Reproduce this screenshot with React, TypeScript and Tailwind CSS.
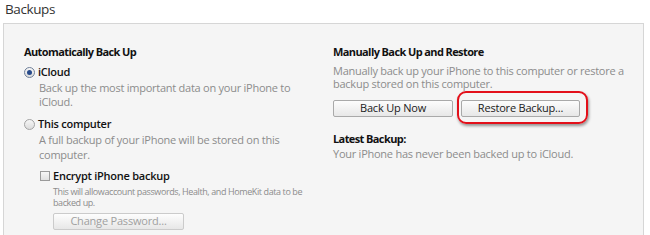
import React from "react";

function Radio({ checked }: { checked?: boolean }) {
  return (
    <span
      className={`flex h-[11px] w-[11px] shrink-0 items-center justify-center rounded-full border bg-gradient-to-b from-[#f6f6f6] to-[#dcdcdc] ${
        checked ? "border-[#6f7f99]" : "border-[#a3a3a3]"
      }`}
    >
      {checked && <span className="h-[5px] w-[5px] rounded-full bg-[#274a8a]" />}
    </span>
  );
}

function Button({ label, disabled }: { label: string; disabled?: boolean }) {
  return (
    <div
      className={`flex h-[17px] items-center justify-center rounded-[2px] border bg-gradient-to-b from-[#fdfdfd] to-[#e7e7e7] text-[11px] tracking-[-0.2px] ${
        disabled ? "border-[#cbcbcb] text-[#a0a0a0]" : "border-[#a9a9a9] text-[#1a1a1a]"
      }`}
    >
      {label}
    </div>
  );
}

export default function App() {
  return (
    <div
      className="h-[235px] w-[650px] overflow-hidden bg-white"
      style={{ fontFamily: '"Open Sans", "Noto Sans", sans-serif' }}
    >
      <h1 className="pl-[5px] text-[13.5px] leading-[18px] tracking-[-0.4px] text-[#333]">Backups</h1>
      <div className="ml-[3px] mr-[6px] mt-[5px] flex h-[220px] border border-[#d6d6d6] bg-[#f5f5f5] pt-[20px] text-[11px] tracking-[-0.25px]">
        {/* automatic backup */}
        <div className="w-[329px] pl-[20px]">
          <h2 className="font-bold leading-[16px] tracking-[-0.6px] text-[#111]">Automatically Back Up</h2>
          <label className="mt-[4px] flex items-center gap-[3px] leading-[16px] text-[#111]">
            <Radio checked />
            <span className="font-semibold">iCloud</span>
          </label>
          <p className="mt-[1px] w-[280px] pl-[15px] leading-[14px] text-[#8c8c8c]">
            Back up the most important data on your iPhone to iCloud.
          </p>
          <label className="mt-[7px] flex items-center gap-[3px] leading-[16px] text-[#111]">
            <Radio />
            <span className="font-semibold">This computer</span>
          </label>
          <p className="w-[280px] pl-[15px] leading-[15px] text-[#8c8c8c]">
            A full backup of your iPhone will be stored on this computer.
          </p>
          <label className="ml-[16px] mt-[6px] flex items-center gap-[3px] leading-[16px] text-[#111]">
            <span className="h-[10px] w-[10px] border border-[#9a9a9a] bg-gradient-to-b from-[#f6f6f6] to-[#e0e0e0]" />
            <span className="font-semibold">Encrypt iPhone backup</span>
          </label>
          <p className="mt-[1.5px] w-[290px] pl-[29px] text-[9px] leading-[11px] tracking-[-0.4px] text-[#8c8c8c]">
            This will allowaccount passwords, Health, and HomeKit data to be backed up.
          </p>
          <div className="ml-[29px] mt-[5px] w-[131px]">
            <Button label="Change Password..." disabled />
          </div>
        </div>

        {/* manual backup */}
        <div className="flex-1">
          <h2 className="font-bold leading-[16px] tracking-[-0.6px] text-[#111]">Manually Back Up and Restore</h2>
          <p className="mt-[4px] w-[300px] leading-[13px] text-[#8c8c8c]">
            Manually back up your iPhone to this computer or restore a backup stored on this computer.
          </p>
          <div className="mt-[10px] flex gap-[8px]">
            <div className="w-[120px]">
              <Button label="Back Up Now" />
            </div>
            <div className="relative w-[119px]">
              <Button label="Restore Backup..." />
              <span className="absolute -bottom-[7px] -left-[4px] -right-[8px] -top-[9px] rounded-[9px] border-[2px] border-[#e3101a] shadow-[1px_2px_3px_rgba(0,0,0,0.4)]" />
            </div>
          </div>
          <h2 className="mt-[14px] font-bold leading-[16px] tracking-[-0.6px] text-[#111]">Latest Backup:</h2>
          <p className="leading-[13px] text-[#8c8c8c]">Your iPhone has never been backed up to iCloud.</p>
        </div>
      </div>
    </div>
  );
}
